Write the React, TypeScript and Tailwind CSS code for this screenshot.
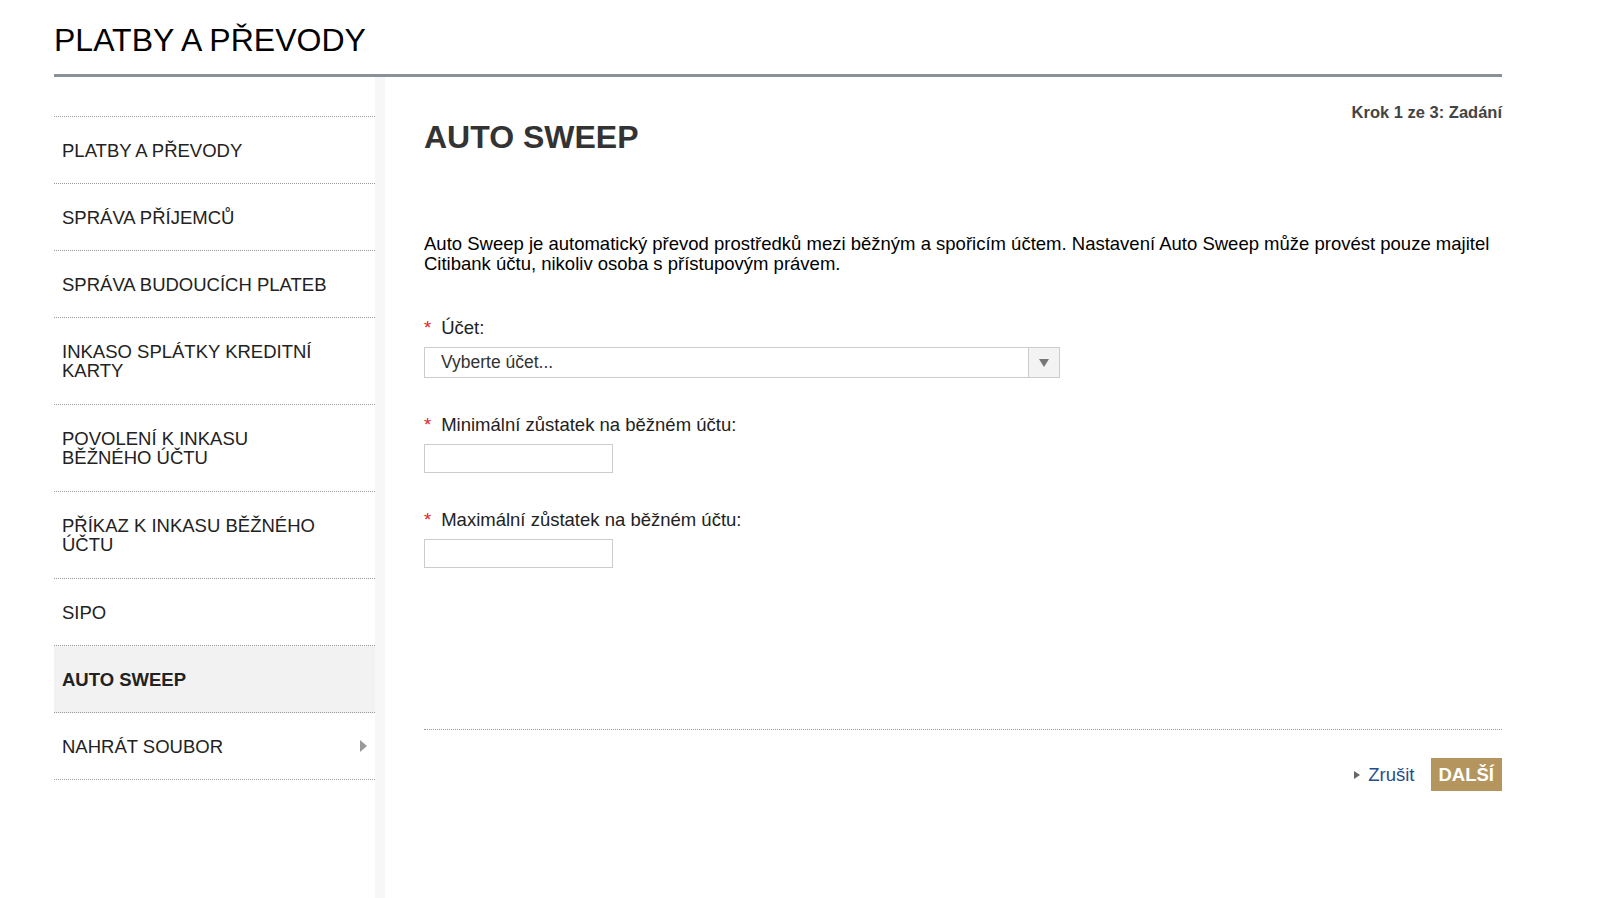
const items: { label: string; tall?: boolean; active?: boolean; arrow?: boolean }[] = [
  { label: 'PLATBY A PŘEVODY' },
  { label: 'SPRÁVA PŘÍJEMCŮ' },
  { label: 'SPRÁVA BUDOUCÍCH PLATEB' },
  { label: 'INKASO SPLÁTKY KREDITNÍ KARTY', tall: true },
  { label: 'POVOLENÍ K INKASU BĚŽNÉHO ÚČTU', tall: true },
  { label: 'PŘÍKAZ K INKASU BĚŽNÉHO ÚČTU', tall: true },
  { label: 'SIPO' },
  { label: 'AUTO SWEEP', active: true },
  { label: 'NAHRÁT SOUBOR', arrow: true },
];

function Label({ text }: { text: string }) {
  return (
    <div className="text-[18.5px] leading-[22px] text-[#222] mb-[8px]">
      <span className="text-[#e0262b] mr-[10px]">*</span>
      {text}
    </div>
  );
}

export default function App() {
  return (
    <div className="w-[1600px] h-[898px] bg-white overflow-hidden font-[family-name:Liberation_Sans,Arial,sans-serif] text-[#222]">
      <div className="ml-[54px] w-[1448px]">
        <h1 className="pt-[21px] h-[74px] text-[32px] leading-[38px] text-black">PLATBY A PŘEVODY</h1>
        <div className="h-[3px] bg-[#8a9299]" />
        <div className="flex">
          <div className="w-[331px] pt-[39px] border-r-[10px] border-[#f7f7f7] h-[830px]">
            <div className="border-t border-dotted border-[#999]">
              {items.map((it) => (
                <div
                  key={it.label}
                  className={`relative flex items-center px-[8px] border-b border-dotted border-[#999] text-[18.5px] leading-[19px] ${it.tall ? 'h-[87px] pr-[60px]' : 'h-[67px]'} ${it.active ? 'bg-[#f2f2f2] font-bold' : ''}`}
                >
                  {it.label}
                  {it.arrow && (
                    <span className="absolute right-[8px] top-[27px] w-0 h-0 border-y-[6px] border-y-transparent border-l-[7px] border-l-[#999]" />
                  )}
                </div>
              ))}
            </div>
          </div>
          <div className="flex-1 pl-[39px]">
            <div className="text-right text-[16.5px] font-bold text-[#444] mt-[25px] leading-[20px]">Krok 1 ze 3: Zadání</div>
            <h2 className="text-[32px] font-bold text-[#333] leading-[38px] mt-[-4px]">AUTO SWEEP</h2>
            <p className="mt-[78px] text-[18.5px] leading-[19.5px] text-black">
              Auto Sweep je automatický převod prostředků mezi běžným a spořicím účtem. Nastavení Auto Sweep může provést pouze majitel Citibank účtu, nikoliv osoba s přístupovým právem.
            </p>
            <div className="mt-[44px]">
              <Label text="Účet:" />
              <div className="w-[636px] h-[31px] border border-[#ccc] flex items-center text-[17.5px] text-[#333]">
                <span className="flex-1 pl-[16px]">Vyberte účet...</span>
                <span className="w-[31px] h-full border-l border-[#ccc] bg-[#f3f3f3] flex items-center justify-center">
                  <span className="w-0 h-0 border-x-[5px] border-x-transparent border-t-[8px] border-t-[#777]" />
                </span>
              </div>
            </div>
            <div className="mt-[36px]">
              <Label text="Minimální zůstatek na běžném účtu:" />
              <div className="w-[189px] h-[29px] border border-[#ccc]" />
            </div>
            <div className="mt-[36px]">
              <Label text="Maximální zůstatek na běžném účtu:" />
              <div className="w-[189px] h-[29px] border border-[#ccc]" />
            </div>
            <div className="mt-[161px] border-t border-dotted border-[#999]" />
            <div className="flex justify-end items-center mt-[28px] gap-[16px]">
              <span className="flex items-center text-[18.5px] text-[#1f4e8c]">
                <span className="w-0 h-0 border-y-[4px] border-y-transparent border-l-[6px] border-l-[#666] mr-[8px]" />
                Zrušit
              </span>
              <span className="bg-[#b5955e] text-white font-bold text-[18.5px] px-[8px] h-[33px] flex items-center">DALŠÍ</span>
            </div>
          </div>
        </div>
      </div>
    </div>
  );
}
